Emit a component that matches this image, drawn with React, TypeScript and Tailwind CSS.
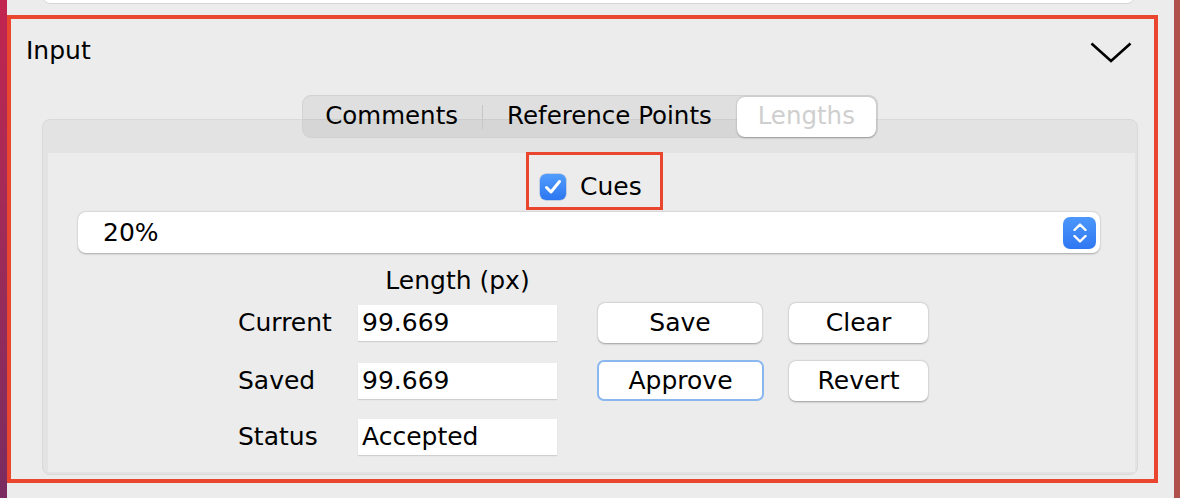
import React from 'react';

const font = { fontFamily: '"DejaVu Sans", Verdana, sans-serif' };

const Chevron: React.FC = () => (
  <svg width="42" height="21" viewBox="0 0 42 21" fill="none">
    <polyline points="1.5,1.5 21,19 40.5,1.5" stroke="#000" strokeWidth="2.6" />
  </svg>
);

const CheckBox: React.FC = () => (
  <div className="w-[26px] h-[26px] rounded-[6px] bg-gradient-to-b from-[#519dfc] to-[#2d76f1] flex items-center justify-center shadow-[0_0_0_0.5px_rgba(0,60,160,0.35)]">
    <svg width="18" height="16" viewBox="0 0 18 16" fill="none">
      <polyline points="2.5,8.5 7,13 15.5,2.5" stroke="white" strokeWidth="3" strokeLinecap="round" strokeLinejoin="round" />
    </svg>
  </div>
);

const Stepper: React.FC = () => (
  <div className="w-[33px] h-[32px] rounded-[7px] bg-gradient-to-b from-[#4c97fb] to-[#2f77f2] flex flex-col items-center justify-center gap-[4px]">
    <svg width="14" height="8" viewBox="0 0 14 8" fill="none">
      <polyline points="1.5,7 7,1.5 12.5,7" stroke="white" strokeWidth="2.4" strokeLinecap="round" strokeLinejoin="round" />
    </svg>
    <svg width="14" height="8" viewBox="0 0 14 8" fill="none">
      <polyline points="1.5,1 7,6.5 12.5,1" stroke="white" strokeWidth="2.4" strokeLinecap="round" strokeLinejoin="round" />
    </svg>
  </div>
);

const Field: React.FC<{ value: string }> = ({ value }) => (
  <div className="w-[199px] h-[36px] bg-white shadow-[0_1px_1px_rgba(0,0,0,0.12)] flex items-center pl-[4px]">
    {value}
  </div>
);

const Btn: React.FC<{ label: string; w: string; focus?: boolean }> = ({ label, w, focus }) => (
  <div
    className={`${w} rounded-[7px] bg-white flex items-center justify-center ${
      focus
        ? 'border-[2px] border-[#8ab7ef] h-[41px]'
        : 'h-[40px] shadow-[0_0.5px_2px_rgba(0,0,0,0.35)]'
    }`}
  >
    {label}
  </div>
);

const App: React.FC = () => {
  return (
    <div className="flex w-[1180px] h-[498px] overflow-hidden bg-[#ececec] text-[25px] text-black" style={font}>
      {/* desktop edge */}
      <div className="w-[7px] bg-gradient-to-b from-[#c2244f] to-[#7a2b60]" />

      <div className="flex-1 flex flex-col">
        {/* card above */}
        <div className="ml-[35px] w-[1093px] h-[12px] -mt-[8px] bg-white border border-[#d6d6d6] rounded-b-lg" />

        {/* highlighted section */}
        <section className="mt-[11px] mr-[16px] h-[468px] border-[4px] border-[#e9452f] flex flex-col">
          <header className="h-[62px] flex items-center justify-between pl-[15px] pr-[22px]">
            <span className="pt-[1px]">Input</span>
            <div className="pt-[4px]">
              <Chevron />
            </div>
          </header>

          {/* tabs */}
          <div className="ml-[31px] mr-[16px] mt-[14px] flex justify-center relative z-10">
            <div className="h-[43px] flex items-center rounded-[9px] bg-black/[0.055] border border-[#d2d2d2] pl-[22px] pr-[1px] text-[24.5px]">
              <span>Comments</span>
              <div className="w-px h-[24px] bg-[#c6c6c6] mx-[24px]" />
              <span>Reference Points</span>
              <div className="ml-[25px] w-[139px] h-[40px] rounded-[8px] bg-white shadow-[0_0.5px_2px_rgba(0,0,0,0.3)] flex items-center justify-center text-[#cfcfcf]">
                Lengths
              </div>
            </div>
          </div>

          {/* box */}
          <div className="ml-[31px] mr-[16px] -mt-[19px] h-[356px] rounded-lg border border-[#d9d9d9] bg-[#e3e3e3] pt-[33px] pl-[5px] pr-[2px] pb-[2px]">
            <div className="h-full bg-[#ececec] flex flex-col">
              {/* cues */}
              <div className="-mt-[1px] flex justify-center pl-[6px]">
                <div className="w-[137px] h-[58px] border-[3px] border-[#e9452f] flex items-start pt-[19px] pl-[11px] gap-[14px]">
                  <CheckBox />
                  <span className="leading-[26px]">Cues</span>
                </div>
              </div>

              {/* popup */}
              <div className="mt-[2px] ml-[30px] mr-[35px] h-[41px] rounded-lg bg-white shadow-[0_0.5px_2px_rgba(0,0,0,0.3)] flex items-center justify-between pl-[25px] pr-[4px]">
                <span>20%</span>
                <Stepper />
              </div>

              {/* lengths */}
              <div className="mt-[14px] pl-[310px] h-[28px] flex items-center">
                <span className="w-[199px] text-center">Length (px)</span>
              </div>

              <div className="mt-[8px] pl-[190px] h-[40px] flex items-center">
                <span className="w-[120px]">Current</span>
                <Field value="99.669" />
                <div className="ml-[41px]"><Btn label="Save" w="w-[164px]" /></div>
                <div className="ml-[27px]"><Btn label="Clear" w="w-[139px]" /></div>
              </div>

              <div className="mt-[17px] pl-[190px] h-[41px] flex items-center">
                <span className="w-[120px]">Saved</span>
                <Field value="99.669" />
                <div className="ml-[40px]"><Btn label="Approve" w="w-[167px]" focus /></div>
                <div className="ml-[25px]"><Btn label="Revert" w="w-[139px]" /></div>
              </div>

              <div className="mt-[18px] pl-[190px] h-[36px] flex items-center">
                <span className="w-[120px]">Status</span>
                <Field value="Accepted" />
              </div>
            </div>
          </div>
        </section>
      </div>

      <div className="w-[6px] bg-[#b0504a]" />
    </div>
  );
};

export default App;
